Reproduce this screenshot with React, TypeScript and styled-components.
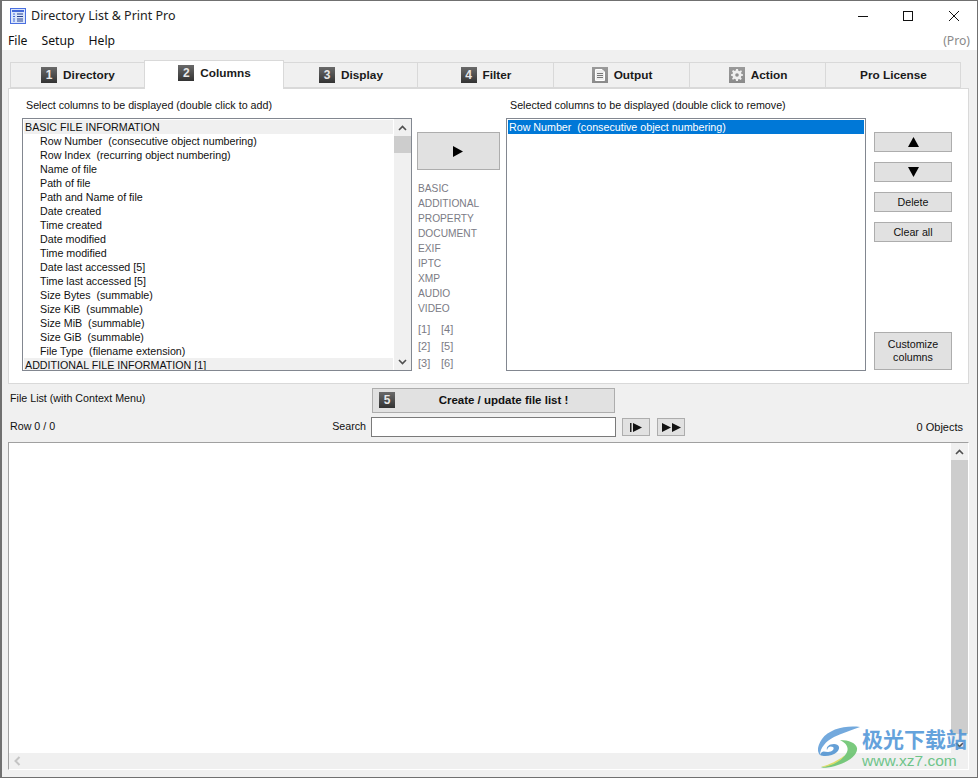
import styled, { createGlobalStyle } from 'styled-components';

const GlobalStyle = createGlobalStyle`
  html, body {
    margin: 0;
    padding: 0;
    background: #f0f0f0;
  }
  * {
    box-sizing: border-box;
  }
`;

const uiFont = `"Noto Sans", "Liberation Sans", sans-serif`;
const bodyFont = `"Liberation Sans", Arial, sans-serif`;

const AppWindow = styled.div`
  width: 978px;
  height: 778px;
  display: flex;
  flex-direction: column;
  position: relative;
  overflow: hidden;
  border: 1px solid #707070;
  border-left-width: 2px;
  background: #f0f0f0;
  color: #111;
  font-family: ${bodyFont};
  font-size: 10.7px;
`;

const TitleBar = styled.div`
  height: 29px;
  flex: none;
  display: flex;
  align-items: center;
  padding-left: 8px;
  background: #fff;
  font-family: ${uiFont};
  font-size: 12.5px;
  color: #222;
`;

const TitleText = styled.span`
  margin-left: 5px;
  flex: 1;
`;

const WindowButton = styled.div`
  width: 46px;
  height: 29px;
  display: flex;
  align-items: center;
  justify-content: center;
  margin-left: -0.4px;
`;

const MenuBar = styled.div`
  height: 20px;
  flex: none;
  display: flex;
  align-items: center;
  gap: 14px;
  padding: 0 7px 0 6px;
  background: #fff;
  font-family: ${uiFont};
  font-size: 12.2px;
`;

const ProTag = styled.span`
  margin-left: auto;
  color: #8a8a8a;
`;

const TabRow = styled.div`
  display: flex;
  align-items: flex-end;
  height: 38px;
  flex: none;
  padding-left: 9px;
  position: relative;
  z-index: 1;
`;

const Tab = styled.div<{ $width: number; $active?: boolean }>`
  width: ${({ $width }) => $width}px;
  height: ${({ $active }) => ($active ? 29 : 26)}px;
  margin-bottom: ${({ $active }) => ($active ? -1 : 0)}px;
  padding-bottom: ${({ $active }) => ($active ? 5 : 0)}px;
  padding-left: 1px;
  display: flex;
  align-items: center;
  justify-content: center;
  gap: 6px;
  background: ${({ $active }) => ($active ? '#fff' : '#f0f0f0')};
  border: 1px solid #d9d9d9;
  border-bottom: ${({ $active }) => ($active ? 'none' : '1px solid #d9d9d9')};
  margin-left: -1px;
  font-size: 11.8px;
  font-weight: bold;
  color: #1a1a1a;
`;

const Badge = styled.span<{ $light?: boolean }>`
  width: 16px;
  height: 16px;
  display: inline-flex;
  align-items: center;
  justify-content: center;
  background: ${({ $light }) =>
    $light
      ? 'linear-gradient(#9a9a9a, #8a8a8a)'
      : 'linear-gradient(#6a6a6a, #333)'};
  color: #e8e8e8;
  font-size: 12px;
  font-weight: bold;
`;

const Panel = styled.div`
  height: 296px;
  flex: none;
  margin: 0 8px 0 6px;
  padding: 9px 16px 0 13px;
  background: #fff;
  border: 1px solid #d9d9d9;
  display: flex;
  align-items: flex-start;
`;

const ListColumn = styled.div<{ $width: number }>`
  width: ${({ $width }) => $width}px;
  flex: none;
  display: flex;
  flex-direction: column;
`;

const ColumnLabel = styled.div`
  height: 20px;
  line-height: 14px;
  padding-left: 4px;
`;

const ListBox = styled.div`
  height: 253px;
  display: flex;
  border: 1px solid #828790;
  background: #fff;
  overflow: hidden;
`;

const Rows = styled.div`
  flex: 1;
  min-width: 0;
  padding: 1px 1px 0;
`;

const ListRow = styled.div<{ $group?: boolean; $selected?: boolean; $indent?: boolean }>`
  height: 14px;
  line-height: 14px;
  white-space: pre;
  padding-left: ${({ $indent }) => ($indent ? 16 : 1)}px;
  background: ${({ $group, $selected }) =>
    $selected ? '#0078d7' : $group ? '#f0f0f0' : 'transparent'};
  color: ${({ $selected }) => ($selected ? '#fff' : '#111')};
`;

const ScrollTrack = styled.div`
  width: 17px;
  flex: none;
  background: #f0f0f0;
  display: flex;
  flex-direction: column;
  align-items: center;
`;

const ScrollArrow = styled.div`
  height: 17px;
  flex: none;
  width: 100%;
  display: flex;
  align-items: center;
  justify-content: center;
`;

const ScrollThumb = styled.div<{ $height: number }>`
  width: 100%;
  height: ${({ $height }) => $height}px;
  background: #cdcdcd;
`;

const ScrollSpacer = styled.div`
  flex: 1;
`;

const MiddleColumn = styled.div`
  width: 83px;
  flex: none;
  margin: 34px 6px 0 5px;
  display: flex;
  flex-direction: column;
`;

const PushButton = styled.div<{ $height: number }>`
  height: ${({ $height }) => $height}px;
  flex: none;
  display: flex;
  align-items: center;
  justify-content: center;
  text-align: center;
  background: #e1e1e1;
  border: 1px solid #adadad;
  line-height: 13px;
  color: #111;
`;

const JumpList = styled.div`
  margin-top: 11px;
  display: flex;
  flex-direction: column;
  color: #7b7b85;
  padding-left: 1px;
  font-size: 10.2px;
`;

const JumpItem = styled.div`
  height: 15px;
  line-height: 15px;
`;

const JumpGrid = styled.div`
  margin-top: 5px;
  padding-left: 1px;
  display: grid;
  grid-template-columns: 23px 23px;
  grid-auto-rows: 17px;
  line-height: 17px;
  color: #7b7b85;
  font-size: 11px;
`;

const ButtonColumn = styled.div`
  width: 78px;
  height: 238px;
  flex: none;
  margin: 34px 0 0 8px;
  display: flex;
  flex-direction: column;
  gap: 10px;
`;

const BottomSpacer = styled.div`
  flex: 1;
`;

const ControlGrid = styled.div`
  flex: none;
  display: grid;
  grid-template-columns: 362px 245px 1fr;
  grid-template-rows: 25px 20px;
  row-gap: 4px;
  margin: 4px 14px 0 7px;
  height: 54px;
`;

const PlainCell = styled.div`
  display: flex;
  align-items: center;
  height: 20px;
  padding-left: 1px;
`;

const RowCell = styled(PlainCell)`
  justify-content: space-between;
  padding-right: 5px;
  padding-bottom: 3px;
`;

const CreateButton = styled.div`
  height: 25px;
  display: flex;
  align-items: center;
  padding: 0 2px 1px 6px;
  background: #e1e1e1;
  border: 1px solid #adadad;
  margin: 0 1px;
  font-size: 11.5px;
  font-weight: bold;
`;

const CreateLabel = styled.span`
  flex: 1;
  text-align: center;
`;

const SearchInput = styled.div`
  height: 20px;
  background: #fff;
  border: 1px solid #7a7a7a;
`;

const StepCell = styled.div`
  display: flex;
  align-items: center;
  gap: 7px;
  padding-left: 6px;
  height: 20px;
`;

const StepButton = styled.div`
  width: 28px;
  height: 18px;
  display: flex;
  align-items: center;
  justify-content: center;
  background: #e1e1e1;
  border: 1px solid #adadad;
`;

const ObjectCount = styled.span`
  margin-left: auto;
  font-size: 11px;
`;

const FileList = styled.div`
  flex: none;
  height: 328px;
  margin: 0 8px 0 6px;
  display: grid;
  grid-template-columns: 1fr 17px;
  grid-template-rows: 1fr 16px;
  background: #fff;
  border-top: 1px solid #a0a0a0;
  border-left: 1px solid #a0a0a0;
  border-bottom: 1px solid #fff;
  border-right: 1px solid #fff;
`;

const FileArea = styled.div`
  background: #fff;
`;

const VerticalTrack = styled(ScrollTrack)`
  width: 100%;
`;

const HorizontalTrack = styled.div`
  background: #f0f0f0;
  display: flex;
  align-items: center;
  padding-left: 5px;
`;

const Corner = styled.div`
  background: #f0f0f0;
`;

const Watermark = styled.div`
  position: absolute;
  left: 814px;
  top: 725px;
  width: 158px;
  height: 46px;
  display: flex;
  opacity: 0.85;
`;

const WatermarkText = styled.div`
  display: flex;
  flex-direction: column;
`;

const WatermarkTitle = styled.div`
  font-family: "Noto Sans CJK SC", sans-serif;
  font-size: 21px;
  line-height: 25px;
  font-weight: bold;
  color: #4a92d6;
  white-space: nowrap;
`;

const WatermarkUrl = styled.div`
  font-size: 15.5px;
  line-height: 18px;
  margin-top: 1px;
  color: #58bd78;
  white-space: nowrap;
`;

const AppIcon = () => (
  <svg width="16" height="16" viewBox="0 0 16 16">
    <rect x="0.5" y="0.5" width="15" height="15" fill="#dbe6fb" stroke="#4a6fe0" />
    <rect x="2" y="2" width="12" height="2" fill="#4468d8" />
    <path d="M3 6h2M3 8.500h2M3 11h2M3 13h2" stroke="#4468d8" />
    <path d="M7 6h6M7 8.500h6M7 11h6M7 13h6" stroke="#27408f" />
  </svg>
);

const ChevronUp = ({ color = '#505050' }: { color?: string }) => (
  <svg width="9" height="6" viewBox="0 0 9 6">
    <path d="M1 5L4.500 1.500L8 5" fill="none" stroke={color} strokeWidth="1.600" />
  </svg>
);

const ChevronDown = ({ color = '#505050' }: { color?: string }) => (
  <svg width="9" height="6" viewBox="0 0 9 6">
    <path d="M1 1L4.500 4.500L8 1" fill="none" stroke={color} strokeWidth="1.600" />
  </svg>
);

const ChevronLeft = () => (
  <svg width="7" height="10" viewBox="0 0 7 10">
    <path d="M5.500 1L1.500 5L5.500 9" fill="none" stroke="#c4c4c4" strokeWidth="2" />
  </svg>
);

const Triangle = ({ direction }: { direction: 'right' | 'up' | 'down' }) => {
  const points = {
    right: '0,0 10,5.500 0,11',
    up: '0,10 5.500,0 11,10',
    down: '0,0 11,0 5.500,10',
  }[direction];
  return (
    <svg width="11" height="11" viewBox="0 0 11 11">
      <polygon points={points} fill="#000" />
    </svg>
  );
};

const StepNext = () => (
  <svg width="13" height="9" viewBox="0 0 13 9">
    <rect x="0" y="0" width="1.500" height="9" fill="#222" />
    <polygon points="3,0 12,4.500 3,9" fill="#111" />
  </svg>
);

const StepLast = () => (
  <svg width="19" height="9" viewBox="0 0 19 9">
    <polygon points="0,0 9,4.500 0,9" fill="#111" />
    <polygon points="10,0 19,4.500 10,9" fill="#111" />
  </svg>
);

const OutputIcon = () => (
  <svg width="10" height="12" viewBox="0 0 10 12">
    <path d="M0.500 0.500H7L9.500 3V11.500H0.500Z" fill="#eee" stroke="#fff" />
    <path d="M2 4.500h6M2 6.500h6M2 8.500h6" stroke="#777" />
  </svg>
);

const GearIcon = () => (
  <svg width="12" height="12" viewBox="0 0 12 12">
    <path
      d="M5 0h2l.3 1.700 1.200.5L10 1.200l1 1-1 1.500.5 1.200 1.500.300v1.600l-1.700.3-.5 1.200 1 1.500-1.200 1.200-1.400-1-1.200.5L7 12H5l-.3-1.700-1.200-.5-1.500 1L1 9.700l1-1.500-.5-1.200L0 6.800V5.200l1.500-.3.500-1.200-1-1.500L2.200 1l1.400 1 1.200-.5Z"
      fill="#eee"
    />
    <circle cx="6" cy="6" r="1.800" fill="#8f8f8f" />
  </svg>
);

const SwirlLogo = () => (
  <svg width="46" height="42" viewBox="0 0 46 42">
    <path
      d="M44 1C30-1 13 3 6 13 1 20 1 26 4 29 4 22 10 15 18 11 26 7 36 4 44 1Z"
      fill="#5b9bd8"
    />
    <path
      d="M4 29C8 31 17 30 21 26 25 22 23 18 18 18 13 18 10 21 11 24 12 20 15 20 17 21 19 23 16 26 12 26 8 26 6 24 4 29Z"
      fill="#4a8fd0"
    />
    <path
      d="M24 14C33 14 40 17 41 22 42 29 32 37 15 41 10 42 6 42 5 41 15 40 28 33 31 26 33 21 30 17 24 14Z"
      fill="#63c168"
    />
    <path d="M5 41C12 39 22 35 29 29 25 35 15 41 5 41Z" fill="#dcd94f" />
  </svg>
);

const basicRows = [
  'Row Number  (consecutive object numbering)',
  'Row Index  (recurring object numbering)',
  'Name of file',
  'Path of file',
  'Path and Name of file',
  'Date created',
  'Time created',
  'Date modified',
  'Time modified',
  'Date last accessed [5]',
  'Time last accessed [5]',
  'Size Bytes  (summable)',
  'Size KiB  (summable)',
  'Size MiB  (summable)',
  'Size GiB  (summable)',
  'File Type  (filename extension)',
];

const jumpItems = ['BASIC', 'ADDITIONAL', 'PROPERTY', 'DOCUMENT', 'EXIF', 'IPTC', 'XMP', 'AUDIO', 'VIDEO'];

const App = () => (
  <AppWindow>
    <GlobalStyle />
    <TitleBar>
      <AppIcon />
      <TitleText>Directory List &amp; Print Pro</TitleText>
      <WindowButton>
        <svg width="10" height="10" viewBox="0 0 10 10">
          <path d="M0 5.500H10" stroke="#111" />
        </svg>
      </WindowButton>
      <WindowButton>
        <svg width="10" height="10" viewBox="0 0 10 10">
          <rect x="0.500" y="0.500" width="9" height="9" fill="none" stroke="#111" />
        </svg>
      </WindowButton>
      <WindowButton>
        <svg width="10" height="10" viewBox="0 0 10 10">
          <path d="M0 0L10 10M10 0L0 10" stroke="#111" />
        </svg>
      </WindowButton>
    </TitleBar>
    <MenuBar>
      <span>File</span>
      <span>Setup</span>
      <span>Help</span>
      <ProTag>(Pro)</ProTag>
    </MenuBar>
    <TabRow>
      <Tab $width={135}><Badge>1</Badge>Directory</Tab>
      <Tab $width={140} $active><Badge>2</Badge>Columns</Tab>
      <Tab $width={135}><Badge>3</Badge>Display</Tab>
      <Tab $width={137}><Badge>4</Badge>Filter</Tab>
      <Tab $width={137}><Badge $light><OutputIcon /></Badge>Output</Tab>
      <Tab $width={137}><Badge $light><GearIcon /></Badge>Action</Tab>
      <Tab $width={136}>Pro License</Tab>
    </TabRow>
    <Panel>
      <ListColumn $width={390}>
        <ColumnLabel>Select columns to be displayed (double click to add)</ColumnLabel>
        <ListBox>
          <Rows>
            <ListRow $group>BASIC FILE INFORMATION</ListRow>
            {basicRows.map((row) => (
              <ListRow $indent key={row}>{row}</ListRow>
            ))}
            <ListRow $group>ADDITIONAL FILE INFORMATION [1]</ListRow>
          </Rows>
          <ScrollTrack>
            <ScrollArrow><ChevronUp /></ScrollArrow>
            <ScrollThumb $height={17} />
            <ScrollSpacer />
            <ScrollArrow><ChevronDown /></ScrollArrow>
          </ScrollTrack>
        </ListBox>
      </ListColumn>
      <MiddleColumn>
        <PushButton $height={38}><Triangle direction="right" /></PushButton>
        <JumpList>
          {jumpItems.map((item) => (
            <JumpItem key={item}>{item}</JumpItem>
          ))}
        </JumpList>
        <JumpGrid>
          <span>[1]</span><span>[4]</span>
          <span>[2]</span><span>[5]</span>
          <span>[3]</span><span>[6]</span>
        </JumpGrid>
      </MiddleColumn>
      <ListColumn $width={360}>
        <ColumnLabel>Selected columns to be displayed (double click to remove)</ColumnLabel>
        <ListBox>
          <Rows>
            <ListRow $selected>Row Number  (consecutive object numbering)</ListRow>
          </Rows>
        </ListBox>
      </ListColumn>
      <ButtonColumn>
        <PushButton $height={20}><Triangle direction="up" /></PushButton>
        <PushButton $height={20}><Triangle direction="down" /></PushButton>
        <PushButton $height={20}>Delete</PushButton>
        <PushButton $height={20}>Clear all</PushButton>
        <BottomSpacer />
        <PushButton $height={38}>Customize<br />columns</PushButton>
      </ButtonColumn>
    </Panel>
    <ControlGrid>
      <PlainCell>File List (with Context Menu)</PlainCell>
      <CreateButton>
        <Badge>5</Badge>
        <CreateLabel>Create / update file list !</CreateLabel>
      </CreateButton>
      <div />
      <RowCell>
        <span>Row 0 / 0</span>
        <span>Search</span>
      </RowCell>
      <SearchInput />
      <StepCell>
        <StepButton><StepNext /></StepButton>
        <StepButton><StepLast /></StepButton>
        <ObjectCount>0 Objects</ObjectCount>
      </StepCell>
    </ControlGrid>
    <FileList>
      <FileArea />
      <VerticalTrack>
        <ScrollArrow><ChevronUp /></ScrollArrow>
        <ScrollThumb $height={274} />
        <ScrollSpacer />
        <ScrollArrow><ChevronDown /></ScrollArrow>
      </VerticalTrack>
      <HorizontalTrack><ChevronLeft /></HorizontalTrack>
      <Corner />
    </FileList>
    <Watermark>
      <SwirlLogo />
      <WatermarkText>
        <WatermarkTitle>极光下载站</WatermarkTitle>
        <WatermarkUrl>www.xz7.com</WatermarkUrl>
      </WatermarkText>
    </Watermark>
  </AppWindow>
);

export default App;
